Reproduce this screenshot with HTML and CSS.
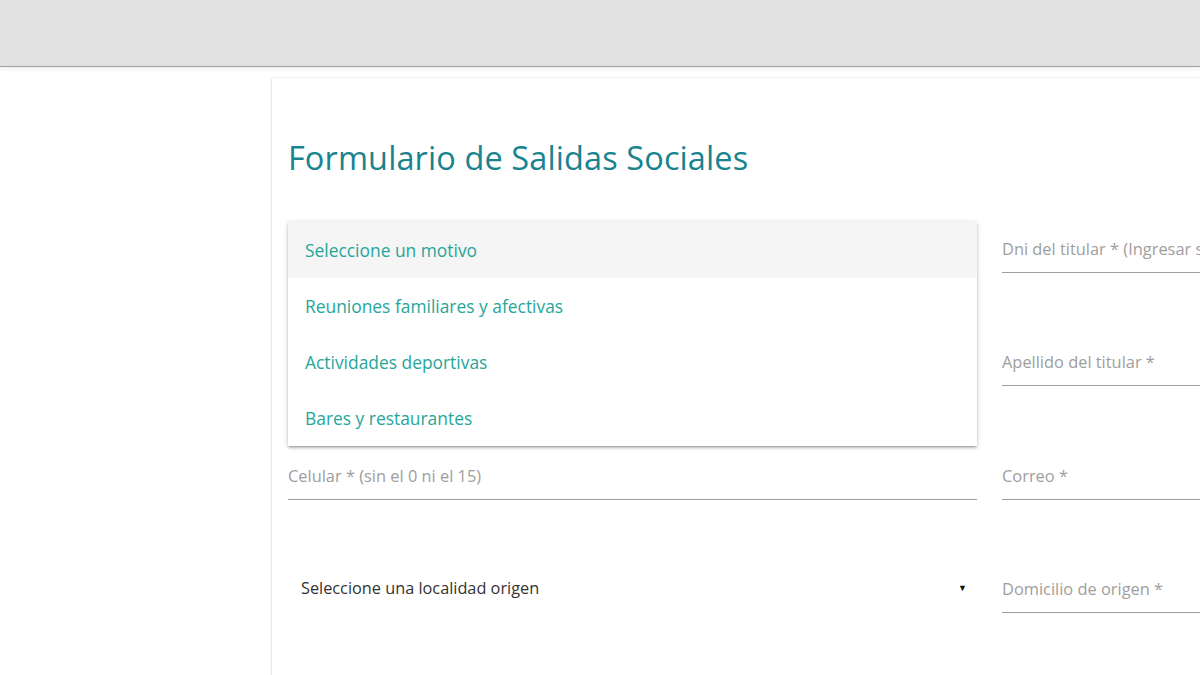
FILE: index.html
```html
<!DOCTYPE html>
<html lang="es">
<head>
<meta charset="utf-8">
<title>Formulario de Salidas Sociales</title>
<link rel="stylesheet" href="styles.css">
</head>
<body>
<header class="topbar"></header>
<main class="page">
  <section class="card">
    <h1 class="title">Formulario de Salidas Sociales</h1>
    <div class="grid">
      <div class="field field-select-wrap">
        <div class="select-input"></div>
        <ul class="dropdown">
          <li class="dd-item active">Seleccione un motivo</li>
          <li class="dd-item">Reuniones familiares y afectivas</li>
          <li class="dd-item">Actividades deportivas</li>
          <li class="dd-item">Bares y restaurantes</li>
        </ul>
      </div>
      <div class="field"><label class="label">Dni del titular * (Ingresar sin puntos)</label></div>
      <div class="field"></div>
      <div class="field"><label class="label">Apellido del titular *</label></div>
      <div class="field"><label class="label">Celular * (sin el 0 ni el 15)</label></div>
      <div class="field"><label class="label">Correo *</label></div>
      <div class="field">
        <div class="native-select"><span>Seleccione una localidad origen</span><span class="arrow">▼</span></div>
      </div>
      <div class="field"><label class="label">Domicilio de origen *</label></div>
    </div>
  </section>
</main>
</body>
</html>
```
FILE: styles.css
```css
html, body {
  margin: 0;
  padding: 0;
  background: #ffffff;
  overflow: hidden;
  width: 1200px;
  height: 675px;
}
body {
  font-family: "Open Sans", "Noto Sans", sans-serif;
}
.topbar {
  height: 66px;
  background: #e2e1e2;
  border-bottom: 1px solid #9f9f9f;
  box-shadow: 0 2px 4px rgba(0,0,0,0.07);
}
.page {
  padding: 11px 0 0 272px;
}
.card {
  width: 1500px;
  height: 700px;
  background: #fff;
  box-shadow: -1px 0 2px rgba(0,0,0,0.10), 0 -1px 3px rgba(0,0,0,0.04);
  padding: 52px 0 0 16px;
  box-sizing: border-box;
}
.title {
  margin: 0 0 36px 0;
  font-weight: 400;
  font-size: 32.5px;
  line-height: 56px;
  color: #19838f;
  letter-spacing: 0.1px;
}
.grid {
  display: grid;
  grid-template-columns: 689px 689px;
  column-gap: 25px;
  row-gap: 0;
}
.field {
  position: relative;
  height: 113.3px;
  box-sizing: border-box;
}
.label {
  display: block;
  height: 50px;
  line-height: 54px;
  font-size: 16.4px;
  color: #9e9e9e;
  border-bottom: 1px solid #9e9e9e;
  white-space: nowrap;
}
.select-input {
  height: 50px;
  border-bottom: 1px solid #9e9e9e;
}
.field-select-wrap { z-index: 2; }
.dropdown {
  position: absolute;
  top: 0;
  left: 0;
  width: 689px;
  margin: 0;
  padding: 0;
  list-style: none;
  background: #fff;
  box-shadow: 0 2px 2px 0 rgba(0,0,0,0.14), 0 3px 1px -2px rgba(0,0,0,0.12), 0 1px 5px 0 rgba(0,0,0,0.2);
}
.dd-item {
  height: 56px;
  line-height: 56px;
  padding: 0 17px;
  font-size: 17.4px;
  color: #26a69a;
  white-space: nowrap;
}
.dd-item.active { background: #f5f5f5; }
.native-select {
  display: flex;
  justify-content: space-between;
  align-items: center;
  height: 52px;
  padding: 0 10px 0 13px;
  font-size: 16.3px;
  color: #333;
}
.arrow {
  font-size: 9px;
  color: #111;
}
```
